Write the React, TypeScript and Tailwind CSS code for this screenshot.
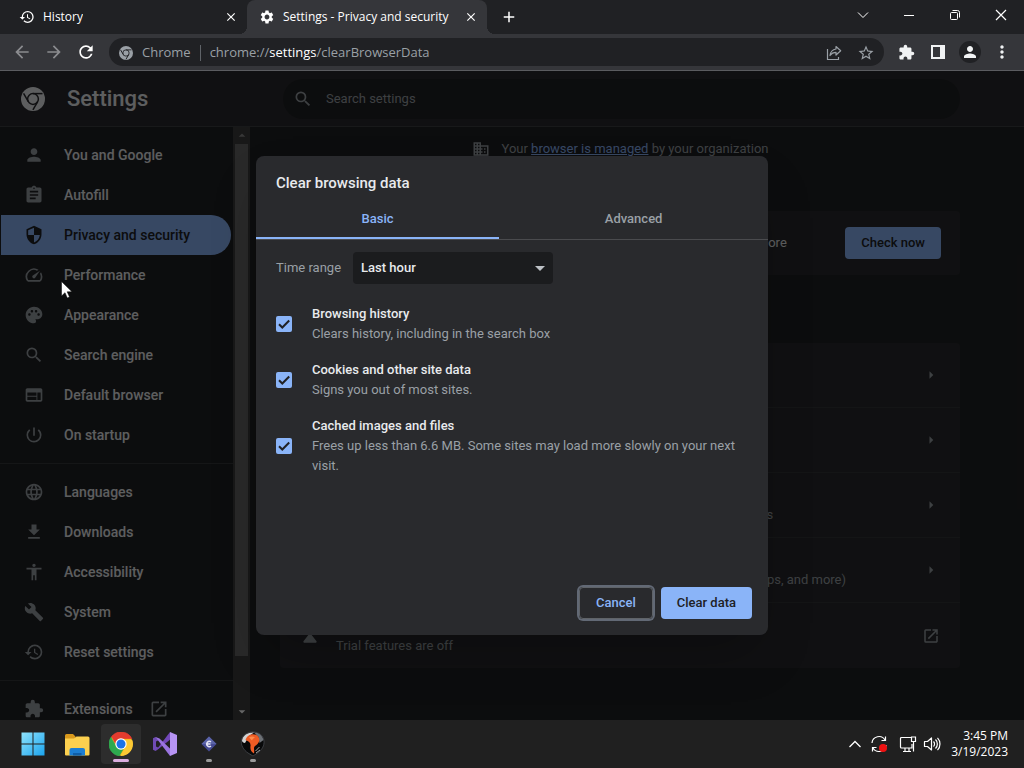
import type { ComponentType } from "react";
import {
  MdAccessibility,
  MdAdd,
  MdArrowBack,
  MdArrowDropDown,
  MdArrowDropUp,
  MdArrowForward,
  MdArrowRight,
  MdAssignment,
  MdBuild,
  MdBusiness,
  MdClose,
  MdCookie,
  MdDeleteSweep,
  MdExtension,
  MdFileDownload,
  MdHistory,
  MdLanguage,
  MdMoreVert,
  MdOpenInNew,
  MdPalette,
  MdPerson,
  MdPowerSettingsNew,
  MdRefresh,
  MdScience,
  MdSearch,
  MdSecurity,
  MdSettings,
  MdSpeed,
  MdStarBorder,
  MdTune,
  MdVerifiedUser,
  MdWeb,
} from "react-icons/md";

type Icon = ComponentType<{ className?: string }>;

interface NavItem {
  label: string;
  icon: Icon;
  active?: boolean;
  external?: boolean;
}

interface SettingRow {
  name: string;
  description?: string;
  icon: Icon;
  external?: boolean;
}

interface DataType {
  id: string;
  title: string;
  description: string;
}

const NAV_GROUPS: NavItem[][] = [
  [
    { label: "You and Google", icon: MdPerson },
    { label: "Autofill", icon: MdAssignment },
    { label: "Privacy and security", icon: MdSecurity, active: true },
    { label: "Performance", icon: MdSpeed },
    { label: "Appearance", icon: MdPalette },
    { label: "Search engine", icon: MdSearch },
    { label: "Default browser", icon: MdWeb },
    { label: "On startup", icon: MdPowerSettingsNew },
  ],
  [
    { label: "Languages", icon: MdLanguage },
    { label: "Downloads", icon: MdFileDownload },
    { label: "Accessibility", icon: MdAccessibility },
    { label: "System", icon: MdBuild },
    { label: "Reset settings", icon: MdHistory },
  ],
  [{ label: "Extensions", icon: MdExtension, external: true }],
];

const SETTING_ROWS: SettingRow[] = [
  { name: "Clear browsing data", icon: MdDeleteSweep },
  { name: "Cookies and other site data", icon: MdCookie },
  { name: "Security", description: "Safe Browsing (protection from dangerous sites) and other security settings", icon: MdSecurity },
  { name: "Site Settings", description: "Controls what information sites can use and show (location, camera, pop-ups, and more)", icon: MdTune },
  { name: "Privacy Sandbox", description: "Trial features are off", icon: MdScience, external: true },
];

const DATA_TYPES: DataType[] = [
  { id: "history", title: "Browsing history", description: "Clears history, including in the search box" },
  { id: "cookies", title: "Cookies and other site data", description: "Signs you out of most sites." },
  {
    id: "cache",
    title: "Cached images and files",
    description: "Frees up less than 6.6 MB. Some sites may load more slowly on your next visit.",
  },
];

const CHROME_TOP = "M12 0C8.21 0 4.831 1.757 2.632 4.501l3.953 6.848A5.454 5.454 0 0 1 12 6.545h10.691A12 12 0 0 0 12 0z";
const CHROME_LEFT = "M1.931 5.47A11.943 11.943 0 0 0 0 12c0 6.012 4.42 10.991 10.189 11.864l3.953-6.847a5.45 5.45 0 0 1-6.865-2.29z";
const CHROME_RIGHT =
  "M15.273 7.636a5.446 5.446 0 0 1 1.45 7.09l-5.344 9.258c.206.01.413.016.621.016 6.627 0 12-5.373 12-12 0-1.54-.29-3.011-.818-4.364z";

function ChromeMark({ className }: { className?: string }) {
  return (
    <svg className={className} viewBox="0 0 24 24">
      <mask id="chrome-cuts">
        <circle cx="12" cy="12" r="12" fill="#fff" />
        <g fill="none" stroke="#000" strokeWidth="1.5">
          <circle cx="12" cy="12" r="5.4" />
          <path d="M12 6.6h9.500" />
          <path d="M12 6.6h9.500" transform="rotate(120 12 12)" />
          <path d="M12 6.6h9.500" transform="rotate(240 12 12)" />
        </g>
      </mask>
      <rect width="24" height="24" fill="currentColor" mask="url(#chrome-cuts)" />
    </svg>
  );
}

function ChromeLogo() {
  return (
    <svg className="size-6" viewBox="0 0 24 24">
      <circle cx="12" cy="12" r="11.5" fill="#fbc116" />
      <path d={CHROME_RIGHT} fill="#fcc934" />
      <path d={CHROME_LEFT} fill="#2da94f" stroke="#2da94f" strokeWidth="0.8" />
      <path d={CHROME_TOP} fill="#e33b2e" stroke="#e33b2e" strokeWidth="0.8" />
      <circle cx="12" cy="12" r="5.7" fill="#fff" />
      <circle cx="12" cy="12" r="4.5" fill="#1a73e8" />
    </svg>
  );
}

function BrowserTab({ title, icon: TabIcon, active }: { title: string; icon: Icon; active?: boolean }) {
  return (
    <div
      className={`relative flex h-[34px] w-60 min-w-0 items-center pl-3 pr-2 text-white ${
        active ? "rounded-t-lg bg-[#35363a]" : ""
      }`}
    >
      {active && (
        <>
          <span className="absolute bottom-0 -left-2 size-2 bg-[radial-gradient(circle_at_0_0,transparent_8px,#35363a_8px)]" />
          <span className="absolute bottom-0 -right-2 size-2 bg-[radial-gradient(circle_at_100%_0,transparent_8px,#35363a_8px)]" />
        </>
      )}
      <button role="tab" aria-selected={!!active} className="flex min-w-0 flex-1 items-center gap-2 text-left text-[12px] leading-4">
        <TabIcon className="size-4 shrink-0" />
        <span className="truncate">{title}</span>
      </button>
      <button aria-label={`Close ${title}`} className="flex size-4 items-center justify-center">
        <MdClose className="size-[14px]" />
      </button>
    </div>
  );
}

function TitleBar() {
  return (
    <div className="flex h-[34px] bg-[#202124]">
      <div role="tablist" className="flex min-w-0 pl-[7px]">
        <BrowserTab title="History" icon={MdHistory} />
        <BrowserTab title="Settings - Privacy and security" icon={MdSettings} active />
      </div>
      <button aria-label="New tab" className="ml-2 flex w-7 items-center justify-center text-white">
        <MdAdd className="size-[18px]" />
      </button>
      <div className="ml-auto flex h-[29px] text-white">
        <button aria-label="Search tabs" className="flex w-[46px] items-center justify-center">
          <svg className="size-3" viewBox="0 0 12 12" fill="none" stroke="currentColor">
            <path d="M1 3.5l5 5 5-5" />
          </svg>
        </button>
        <button aria-label="Minimize" className="flex w-[46px] items-center justify-center">
          <svg className="size-3" viewBox="0 0 12 12" fill="none" stroke="currentColor">
            <path d="M1 6.5h10" />
          </svg>
        </button>
        <button aria-label="Restore" className="flex w-[46px] items-center justify-center">
          <svg className="size-3" viewBox="0 0 12 12" fill="none" stroke="currentColor">
            <rect x="1.5" y="3.5" width="7" height="7" rx="1" />
            <path d="M3.5 1.5h5a2 2 0 0 1 2 2v5" />
          </svg>
        </button>
        <button aria-label="Close window" className="flex w-[46px] items-center justify-center">
          <svg className="size-3" viewBox="0 0 12 12" fill="none" stroke="currentColor" strokeWidth="1.2">
            <path d="M1 1l10 10M11 1L1 11" />
          </svg>
        </button>
      </div>
    </div>
  );
}

function Toolbar() {
  return (
    <div className="flex h-[37px] items-center border-b border-[#5b5c60] bg-[#35363a] pl-1.5 pr-1.5">
      <button aria-label="Back" className="flex size-8 items-center justify-center text-[#8b8c8f]">
        <MdArrowBack className="size-5" />
      </button>
      <button aria-label="Forward" className="flex size-8 items-center justify-center text-[#8b8c8f]">
        <MdArrowForward className="size-5" />
      </button>
      <button aria-label="Reload" className="flex size-8 items-center justify-center text-white">
        <MdRefresh className="size-5" />
      </button>
      <div className="ml-[7px] flex h-7 min-w-0 flex-1 items-center rounded-full bg-[#202124] pl-2.5 pr-2 pt-px text-[13px] text-[#9aa0a6]">
        <ChromeMark className="size-[14px] shrink-0" />
        <span className="ml-[9px]">Chrome</span>
        <span className="mx-[9px] h-4 w-px bg-[#5f6368]" />
        <span className="flex-1 truncate">
          chrome://<span className="text-white">settings</span>/clearBrowserData
        </span>
        <button aria-label="Share" className="mr-1.5 flex w-8 items-center justify-center">
          <svg className="size-4" viewBox="0 0 16 16" fill="none" stroke="currentColor" strokeWidth="1.2">
            <path d="M1.500 4v10.500h11V12" />
            <path d="M10 1.500l4.700 4.200L10 10V7.300C7.300 7.300 5.500 8.300 4 10.500 4.500 7 6.500 4.500 10 4z" strokeLinejoin="round" />
          </svg>
        </button>
        <button aria-label="Bookmark this tab" className="flex w-5 items-center justify-center">
          <MdStarBorder className="size-[18px]" />
        </button>
      </div>
      <div className="ml-1.5 flex text-[#f1f3f4]">
        <button aria-label="Extensions" className="flex size-8 items-center justify-center">
          <MdExtension className="size-[17px]" />
        </button>
        <button aria-label="Side panel" className="flex size-8 items-center justify-center">
          <svg className="size-[14px]" viewBox="0 0 14 14" fill="none" stroke="currentColor" strokeWidth="2">
            <rect x="1" y="1" width="12" height="12" />
            <path d="M11 1v12" strokeWidth="4" />
          </svg>
        </button>
        <button aria-label="Profile" className="flex size-8 items-center justify-center">
          <span className="flex size-[22px] items-center justify-center rounded-full bg-[#202124]">
            <MdPerson className="size-[18px]" />
          </span>
        </button>
        <button aria-label="Menu" className="flex size-8 items-center justify-center">
          <MdMoreVert className="size-5" />
        </button>
      </div>
    </div>
  );
}

function Sidebar() {
  return (
    <aside className="flex w-[250px] shrink-0 overflow-hidden">
      <nav className="min-w-0 flex-1 pt-2">
        {NAV_GROUPS.map((group, i) => (
          <div key={i} className={i > 0 ? "mt-2 border-t border-white/10 pt-2" : ""}>
            {group.map(({ label, icon: NavIcon, active, external }) => (
              <a
                key={label}
                href="#"
                className={`ml-px mr-0.5 flex h-10 items-center rounded-r-full pl-[23px] text-[14px] font-medium ${
                  active ? "bg-[#8ab4f8] text-[#202124]" : "text-[#e8eaed]"
                }`}
              >
                <NavIcon className={`mr-5 size-5 ${active ? "" : "text-[#9aa0a6]"}`} />
                {label}
                {external && <MdOpenInNew className="ml-4 size-5 text-[#9aa0a6]" />}
              </a>
            ))}
          </div>
        ))}
      </nav>
      {/* Scrollbar */}
      <div className="flex w-[17px] flex-col items-center bg-[#3c3c3c]">
        <MdArrowDropUp className="h-[17px] w-4 text-[#8a8a8a]" />
        <div className="w-[13px] flex-1 bg-[#686868]" />
        <div className="h-[47px]" />
        <MdArrowDropDown className="h-[17px] w-4 text-white" />
      </div>
    </aside>
  );
}

function SettingsPage() {
  return (
    <div className="flex h-full flex-col bg-[#202124] text-[13px] text-[#e8eaed]">
      <header className="flex h-14 shrink-0 items-center border-b border-white/10 bg-[#292a2d] pr-16">
        <div className="flex w-[283px] shrink-0 items-center gap-[22px] pl-[21px]">
          <ChromeMark className="size-6" />
          <h1 className="text-[22px] font-medium">Settings</h1>
        </div>
        <label className="flex h-10 min-w-0 flex-1 items-center gap-[13px] rounded-full bg-[#202124] pl-2.5">
          <MdSearch className="size-5 text-[#9aa0a6]" />
          <input
            aria-label="Search settings"
            placeholder="Search settings"
            className="min-w-0 flex-1 bg-transparent outline-none placeholder:text-[#9aa0a6]"
          />
        </label>
      </header>
      <div className="flex min-h-0 flex-1">
        <Sidebar />
        <main className="min-w-0 flex-1 overflow-hidden pl-[30px] pr-16">
          <div className="mt-3 flex h-5 items-center justify-center gap-3 whitespace-nowrap text-[#9aa0a6]">
            <MdBusiness className="size-[18px]" />
            <p>
              Your <a href="#" className="text-[#8ab4f8] underline">browser is managed</a> by your organization
            </p>
          </div>
          <section aria-label="Safety check" className="mt-13 flex h-16 items-center rounded bg-[#292a2d] pl-5 pr-[19px]">
            <MdVerifiedUser className="mr-4 size-5 shrink-0 text-[#8ab4f8]" />
            <p className="flex-1 whitespace-nowrap">Chrome can help keep you safe from data breaches, bad extensions, and more</p>
            <button className="h-8 rounded bg-[#8ab4f8] px-4 font-medium text-[#202124]">Check now</button>
          </section>
          <section aria-label="Privacy and security" className="mt-17 divide-y divide-white/5 rounded bg-[#292a2d]">
            {SETTING_ROWS.map(({ name, description, icon: RowIcon, external }) => (
              <a key={name} href="#" aria-label={name} className="flex h-[65px] items-center px-5">
                <RowIcon className="mr-4 size-5 shrink-0 text-[#9aa0a6]" />
                <span className="min-w-0 flex-1 whitespace-nowrap pt-5 leading-5 text-[#9aa0a6]">{description}</span>
                {external ? (
                  <MdOpenInNew className="size-[18px] text-[#9aa0a6]" />
                ) : (
                  <MdArrowRight className="size-[18px] text-[#9aa0a6]" />
                )}
              </a>
            ))}
          </section>
        </main>
      </div>
    </div>
  );
}

function ClearDataDialog() {
  return (
    <div
      role="dialog"
      aria-labelledby="dialog-title"
      className="flex min-h-[479px] w-full max-w-lg flex-col rounded-lg bg-[#292a2d] pb-4 text-[13px] text-[#e8eaed] shadow-2xl"
    >
      <h2 id="dialog-title" className="px-5 pt-[17px] text-[15px] font-medium leading-5">
        Clear browsing data
      </h2>
      <div role="tablist" className="mt-[7px] flex h-10 border-b border-[#4a4b4e] font-medium">
        <button role="tab" aria-selected className="flex-auto border-b-2 border-[#8ab4f8] text-[#8ab4f8]">
          Basic
        </button>
        <button role="tab" aria-selected={false} className="flex-auto border-b-2 border-transparent text-[#9aa0a6]">
          Advanced
        </button>
      </div>

      <div className="mt-3 flex items-center gap-3 px-5">
        <label htmlFor="time-range" className="text-[#9aa0a6]">Time range</label>
        <div className="relative">
          <select id="time-range" className="h-8 w-[200px] appearance-none rounded bg-[#1b1c1e] px-2 font-medium">
            <option>Last hour</option>
            <option>Last 24 hours</option>
            <option>Last 7 days</option>
            <option>Last 4 weeks</option>
            <option>All time</option>
          </select>
          <svg className="pointer-events-none absolute right-2 top-3.5 h-[5px] w-2.5 text-[#bdc1c6]" viewBox="0 0 10 5" fill="currentColor">
            <path d="M0 0h10L5 5z" />
          </svg>
        </div>
      </div>

      <div className="mt-5 flex flex-col gap-4 px-5">
        {DATA_TYPES.map(({ id, title, description }) => (
          <label key={id} htmlFor={id} className="flex items-center gap-5 leading-5">
            <span className="relative flex size-4 shrink-0">
              <input id={id} type="checkbox" defaultChecked className="peer size-4 appearance-none rounded-xs bg-[#5f6368] checked:bg-[#8ab4f8]" />
              <svg
                className="pointer-events-none absolute inset-0 hidden size-4 text-[#202124] peer-checked:block"
                viewBox="0 0 16 16"
                fill="none"
                stroke="currentColor"
                strokeWidth="2"
              >
                <path d="M3 8.200l3.300 3.300L13.200 4.500" />
              </svg>
            </span>
            <span>
              <span className="block font-medium">{title}</span>
              <span className="block text-[#9aa0a6]">{description}</span>
            </span>
          </label>
        ))}
      </div>

      <div className="mt-auto flex justify-end gap-2 px-4 font-medium">
        <button className="h-8 rounded border border-[#5f6368] px-4 text-[#8ab4f8] ring-2 ring-[#626975]">Cancel</button>
        <button className="h-8 rounded bg-[#8ab4f8] px-4 text-[#202124]">Clear data</button>
      </div>
    </div>
  );
}

function WindowsLogo() {
  return (
    <svg className="size-6" viewBox="0 0 24 24">
      <defs>
        <linearGradient id="win" x1="0" y1="0" x2="1" y2="1">
          <stop offset="0" stopColor="#8fe3fd" />
          <stop offset="1" stopColor="#1ba4ee" />
        </linearGradient>
      </defs>
      <path fill="url(#win)" d="M.5.5h11v11H.5zM12.500.500h11v11h-11zM.500 12.500h11v11H.500zM12.500 12.500h11v11h-11z" />
    </svg>
  );
}

function FolderIcon() {
  return (
    <svg className="size-[26px]" viewBox="0 0 26 26">
      <path d="M1 4.500A1.500 1.500 0 0 1 2.500 3H9l2.500 2.500V9H1z" fill="#d9991c" />
      <path d="M1 7.500h9l2.500-2H24a1.500 1.500 0 0 1 1.500 1.500v16.500a1 1 0 0 1-1 1H2a1 1 0 0 1-1-1z" fill="#fcd04f" />
      <path d="M5.500 24.500V19A2 2 0 0 1 7.500 17H19a2 2 0 0 1 2 2v5.500z" fill="#1c7ed3" />
      <path d="M9 24.500V22h8.500v2.500z" fill="#0f5ea8" />
    </svg>
  );
}

function VisualStudioIcon() {
  return (
    <svg className="size-6" viewBox="0 0 24 24">
      <path d="M0 6.300L2.500 5 6 8 3 9.500v5L6 16l-3.500 3L0 17.700z" fill="#6f4bb3" />
      <path d="M2.500 19L17 0l1.500 6.500L6 16.500z" fill="#7248b9" />
      <path d="M2.500 5L6.500 6.500 18 17.500 17 24z" fill="#9a74e0" />
      <path d="M17 0l7 3v18l-7 3z" fill="#b794f4" />
    </svg>
  );
}

function DiamondIcon() {
  return (
    <svg className="size-4" viewBox="0 0 16 16">
      <path d="M8 .500L15.500 8 8 15.500.500 8z" fill="#454a92" />
      <path d="M8 .500L15.500 8H.500z" fill="#5b64a8" />
      <path d="M10 5.800a2.700 2.700 0 1 0 0 4.400M6 8h3.500" fill="none" stroke="#e4e4f4" strokeWidth="1.500" />
    </svg>
  );
}

function BirdIcon() {
  return (
    <svg className="size-[26px]" viewBox="0 0 26 26">
      <path d="M1.500 9C2.500 4 8 .800 13 1c6 0 10.500 3.500 11 9 .400 5-2 8-5 11l-6 4-5-3C3.500 19 .500 14 1.500 9z" fill="#08090a" stroke="#45484c" strokeWidth="0.800" />
      <path d="M2 9.500C3 4 8 1.200 14 1.500L9 5 5 12c-1.500 0-3-1-3-2.500z" fill="#d3d3d3" />
      <path d="M14 1.500c5 0 8.500 3 9.500 7.500l-4 3-1-6z" fill="#6d7176" />
      <path d="M5.500 9C7 4 12 2 16.500 4c3.500 2 3.500 6.500 1 9-2 2-3.500 2-3.500 4.500 0 2 .500 3 0 5-3-1.500-4-4-3.500-7.500C11 12.500 9 10 5.500 9z" fill="#ee5b24" />
      <path d="M9 6.500c2-1.500 4-1.500 6 0-1.500.500-2.500 1.500-3 3z" fill="#ff8a4a" />
      <path d="M15.500 20l4-4M16 22l4-3" stroke="#c9c9c9" strokeWidth="0.800" />
    </svg>
  );
}

const TASKBAR_APPS = [
  { name: "Start", icon: <WindowsLogo />, state: "idle" },
  { name: "File Explorer", icon: <FolderIcon />, state: "idle" },
  { name: "Google Chrome", icon: <ChromeLogo />, state: "active" },
  { name: "Visual Studio", icon: <VisualStudioIcon />, state: "idle" },
  { name: "Editor", icon: <DiamondIcon />, state: "running" },
  { name: "Phoenix", icon: <BirdIcon />, state: "running" },
];

function Taskbar() {
  return (
    <footer className="flex h-12 shrink-0 items-center bg-[#202020] pl-[13px] pr-4 text-white">
      <div className="flex gap-1">
        {TASKBAR_APPS.map(({ name, icon, state }) => (
          <button
            key={name}
            aria-label={name}
            className={`relative flex size-10 items-center justify-center rounded ${state === "active" ? "bg-[#2d2d2d]" : ""}`}
          >
            {icon}
            {state === "active" && <span className="absolute bottom-0.5 h-[3px] w-4 rounded-full bg-[#dcaee0]" />}
            {state === "running" && <span className="absolute bottom-0.5 h-[3px] w-1.5 rounded-full bg-[#9a9a9a]" />}
          </button>
        ))}
      </div>
      <div className="ml-auto flex items-center">
        <button aria-label="Show hidden icons" className="flex w-6 justify-center">
          <svg className="size-3.5" viewBox="0 0 14 14" fill="none" stroke="currentColor" strokeWidth="1.300">
            <path d="M1.500 10L7 4.500l5.500 5.500" />
          </svg>
        </button>
        <button aria-label="Updates" className="flex w-6 justify-center">
          <svg className="size-[18px]" viewBox="0 0 18 18" fill="none" stroke="currentColor" strokeWidth="1.200">
            <path d="M2 8a7 7 0 0 1 13-3M15.500 1.500V5.500h-4M16 10a7 7 0 0 1-13 3M2.500 16.500v-4h4" />
            <circle cx="13" cy="13" r="4" fill="#ee1111" stroke="none" />
          </svg>
        </button>
        <button aria-label="Network and volume" className="ml-1 flex items-center gap-1.5 px-1">
          <svg className="size-[18px]" viewBox="0 0 18 18" fill="none" stroke="currentColor" strokeWidth="1.200">
            <path d="M12 2.500H2.500a1 1 0 0 0-1 1v8.500a1 1 0 0 0 1 1h10.500V9M4 16.500h8M6 13v3.500M10 13v3.500" />
            <path d="M12.500 2h4v4.500h-4zM14.500 6.500V16.500" />
          </svg>
          <svg className="size-[18px]" viewBox="0 0 18 18" fill="none" stroke="currentColor" strokeWidth="1.200">
            <path d="M1.500 6.500h3L8.500 3v12l-4-3.500h-3z" strokeLinejoin="round" />
            <path d="M10.500 6.500a3.500 3.500 0 0 1 0 5M12.500 4.500a6.400 6.400 0 0 1 0 9M14.500 2.800a9 9 0 0 1 0 12.400" />
          </svg>
        </button>
        <div className="ml-1.5 text-right text-[12px] leading-4">
          <div>3:45 PM</div>
          <div>3/19/2023</div>
        </div>
      </div>
    </footer>
  );
}

export default function App() {
  return (
    <div className="flex h-screen flex-col overflow-hidden bg-[#202124] font-['Open_Sans','Noto_Sans',sans-serif]">
      <TitleBar />
      <Toolbar />
      <div className="relative min-h-0 flex-1 font-[Roboto,sans-serif]">
        <SettingsPage />
        {/* Modal backdrop */}
        <div className="absolute inset-0 flex items-center justify-center bg-black/60">
          <ClearDataDialog />
        </div>
        {/* Mouse pointer */}
        <svg className="absolute left-[61px] top-[210px] h-[18px] w-3" viewBox="0 0 12 18" fill="#fff" stroke="#000" strokeWidth="0.500">
          <path d="M.500.500v14.500l3.500-3.300 2.300 5.300 2.200-1-2.300-5.200h4.800z" />
        </svg>
      </div>
      <Taskbar />
    </div>
  );
}
